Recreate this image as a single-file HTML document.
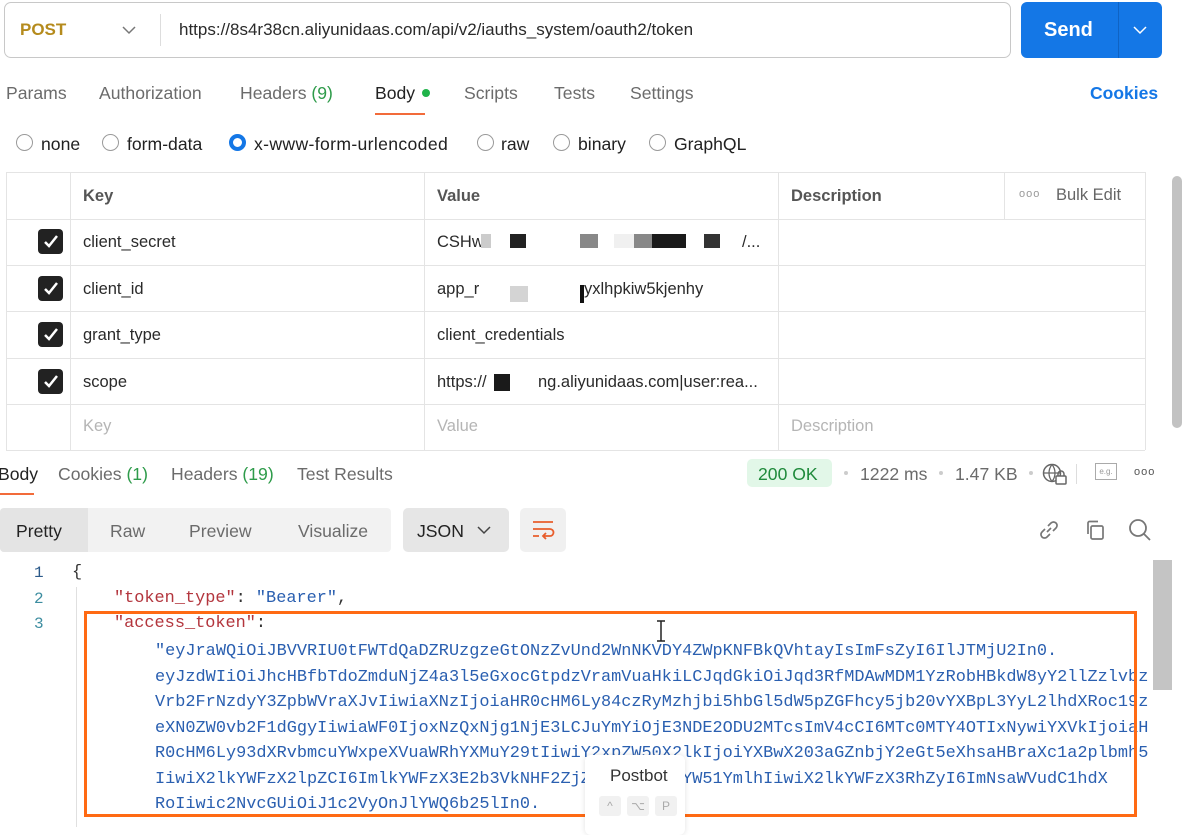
<!DOCTYPE html>
<html><head><meta charset="utf-8"><style>
*{box-sizing:border-box;margin:0;padding:0}
body{width:1185px;height:827px;overflow:hidden;background:#fff;font-family:"Liberation Sans",sans-serif;position:relative;color:#212121}
.a{position:absolute;white-space:nowrap}
.g{color:#6b6b6b}
.cb{position:absolute;left:38px;width:25px;height:25px;background:#222;border-radius:4px}
.cb svg{position:absolute;left:4px;top:4px}
.hl{position:absolute;left:6px;width:1139px;height:1px;background:#e4e4e4}
.vl{position:absolute;width:1px;background:#e4e4e4}
.rad{position:absolute;width:17px;height:17px;border:1.5px solid #9a9a9a;border-radius:50%}
.code{position:absolute;font-family:"Liberation Mono",monospace;font-size:16.9px;white-space:pre;color:#2a5fb0}
.k{color:#b3353d}
.p{color:#333}
.ln{position:absolute;left:34px;font-family:"Liberation Mono",monospace;font-size:16px;color:#3d8da0}
.cell{position:absolute;font-size:16.5px;color:#2a2a2a;white-space:nowrap}
.t{font-size:17.6px}
</style></head><body>
<div class="a" style="left:4px;top:2px;width:1007px;height:56px;border:1.5px solid #c8c8c8;border-radius:7px"></div>
<div class="a" style="left:20px;top:20px;font-size:17px;font-weight:bold;color:#b58b1d">POST</div>
<svg class="a" style="left:122px;top:25px" width="14" height="10"><path d="M1 2l6 6 6-6" stroke="#777" fill="none" stroke-width="1.5"/></svg>
<div class="a" style="left:160px;top:14px;width:1px;height:32px;background:#ddd"></div>
<div class="a" style="left:179px;top:20px;font-size:17px;color:#2a2a2a">https://8s4r38cn.aliyunidaas.com/api/v2/iauths_system/oauth2/token</div>
<div class="a" style="left:1021px;top:2px;width:141px;height:56px;background:#1477e6;border-radius:6px"></div>
<div class="a" style="left:1118px;top:2px;width:1px;height:56px;background:#0f63c4"></div>
<div class="a" style="left:1044px;top:19px;font-size:20px;font-weight:bold;color:#fff">Send</div>
<svg class="a" style="left:1133px;top:25px" width="14" height="10"><path d="M1 2l6 6 6-6" stroke="#fff" fill="none" stroke-width="1.5"/></svg>
<div class="a g t" style="left:6px;top:83px">Params</div>
<div class="a g t" style="left:99px;top:83px">Authorization</div>
<div class="a g t" style="left:240px;top:83px">Headers <span style="color:#2e9b4a">(9)</span></div>
<div class="a t" style="left:375px;top:83px;color:#222">Body</div>
<div class="a" style="left:422px;top:89px;width:8px;height:8px;border-radius:50%;background:#20b34a"></div>
<div class="a" style="left:375px;top:113px;width:50px;height:2px;background:#f26b3a"></div>
<div class="a g t" style="left:464px;top:83px">Scripts</div>
<div class="a g t" style="left:554px;top:83px">Tests</div>
<div class="a g t" style="left:630px;top:83px">Settings</div>
<div class="a" style="left:1090px;top:83px;font-size:17.5px;font-weight:bold;color:#1477e6">Cookies</div>
<div class="rad" style="left:16px;top:134px"></div><div class="a t" style="left:41px;top:134px">none</div>
<div class="rad" style="left:102px;top:134px"></div><div class="a t" style="left:127px;top:134px">form-data</div>
<div class="rad" style="left:229px;top:134px;border:4.5px solid #1477e6"></div><div class="a t" style="left:254px;top:134px;letter-spacing:0.35px">x-www-form-urlencoded</div>
<div class="rad" style="left:477px;top:134px"></div><div class="a t" style="left:501px;top:134px">raw</div>
<div class="rad" style="left:553px;top:134px"></div><div class="a t" style="left:578px;top:134px">binary</div>
<div class="rad" style="left:649px;top:134px"></div><div class="a t" style="left:674px;top:134px">GraphQL</div>
<div class="hl" style="top:172px"></div>
<div class="hl" style="top:219px"></div>
<div class="hl" style="top:265px"></div>
<div class="hl" style="top:311px"></div>
<div class="hl" style="top:358px"></div>
<div class="hl" style="top:404px"></div>
<div class="hl" style="top:450px"></div>
<div class="vl" style="left:6px;top:172px;height:278px"></div>
<div class="vl" style="left:70px;top:172px;height:278px"></div>
<div class="vl" style="left:424px;top:172px;height:278px"></div>
<div class="vl" style="left:778px;top:172px;height:278px"></div>
<div class="vl" style="left:1004px;top:172px;height:47px"></div>
<div class="vl" style="left:1145px;top:172px;height:278px"></div>
<div class="cell" style="left:83px;top:187px;font-weight:bold;color:#555">Key</div>
<div class="cell" style="left:437px;top:187px;font-weight:bold;color:#555">Value</div>
<div class="cell" style="left:791px;top:187px;font-weight:bold;color:#555">Description</div>
<div class="cell" style="left:1019px;top:188px;color:#999;font-size:11px;letter-spacing:1px">ooo</div>
<div class="cell" style="left:1056px;top:186px;color:#666">Bulk Edit</div>
<div class="cb" style="top:229px"><svg width="17" height="17"><path d="M3 9l4 4 8-10" stroke="#fff" stroke-width="2.5" fill="none"/></svg></div>
<div class="cb" style="top:276px"><svg width="17" height="17"><path d="M3 9l4 4 8-10" stroke="#fff" stroke-width="2.5" fill="none"/></svg></div>
<div class="cb" style="top:322px"><svg width="17" height="17"><path d="M3 9l4 4 8-10" stroke="#fff" stroke-width="2.5" fill="none"/></svg></div>
<div class="cb" style="top:369px"><svg width="17" height="17"><path d="M3 9l4 4 8-10" stroke="#fff" stroke-width="2.5" fill="none"/></svg></div>
<div class="cell" style="left:83px;top:233px">client_secret</div>
<div class="cell" style="left:83px;top:280px">client_id</div>
<div class="cell" style="left:83px;top:326px">grant_type</div>
<div class="cell" style="left:83px;top:373px">scope</div>
<div class="cell" style="left:437px;top:233px">CSHw</div>
<div class="a" style="left:481px;top:234px;width:10px;height:14px;background:#ccc"></div>
<div class="a" style="left:510px;top:234px;width:16px;height:14px;background:#222"></div>
<div class="a" style="left:580px;top:234px;width:18px;height:14px;background:#888"></div>
<div class="a" style="left:614px;top:234px;width:20px;height:14px;background:#f0f0f0"></div>
<div class="a" style="left:634px;top:234px;width:18px;height:14px;background:#888"></div>
<div class="a" style="left:652px;top:234px;width:34px;height:14px;background:#1a1a1a"></div>
<div class="a" style="left:704px;top:234px;width:16px;height:14px;background:#333"></div>
<div class="cell" style="left:742px;top:233px">/...</div>
<div class="cell" style="left:437px;top:280px">app_r</div>
<div class="a" style="left:510px;top:286px;width:18px;height:16px;background:#d4d4d4"></div>
<div class="a" style="left:580px;top:285px;width:4px;height:18px;background:#111"></div>
<div class="cell" style="left:584px;top:280px">yxlhpkiw5kjenhy</div>
<div class="cell" style="left:437px;top:326px">client_credentials</div>
<div class="cell" style="left:437px;top:373px">https://</div>
<div class="a" style="left:494px;top:374px;width:16px;height:17px;background:#1a1a1a"></div>
<div class="cell" style="left:538px;top:373px">ng.aliyunidaas.com|user:rea...</div>
<div class="cell" style="left:83px;top:417px;color:#b5b5b5">Key</div>
<div class="cell" style="left:437px;top:417px;color:#b5b5b5">Value</div>
<div class="cell" style="left:791px;top:417px;color:#b5b5b5">Description</div>
<div class="a" style="left:1172px;top:176px;width:10px;height:252px;background:#c2c2c2;border-radius:5px"></div>
<div class="a t" style="left:-2px;top:464px;color:#222">Body</div>
<div class="a" style="left:0;top:493px;width:34px;height:2px;background:#f26b3a"></div>
<div class="a g t" style="left:58px;top:464px">Cookies <span style="color:#2e9b4a">(1)</span></div>
<div class="a g t" style="left:171px;top:464px">Headers <span style="color:#2e9b4a">(19)</span></div>
<div class="a g t" style="left:297px;top:464px">Test Results</div>
<div class="a" style="left:747px;top:459px;width:85px;height:28px;background:#e2f7e8;border-radius:5px"></div>
<div class="a t" style="left:758px;top:464px;color:#1f8a3b">200 OK</div>
<div class="a" style="left:844px;top:471px;width:4px;height:4px;border-radius:50%;background:#ccc"></div>
<div class="a g t" style="left:860px;top:464px">1222 ms</div>
<div class="a" style="left:939px;top:471px;width:4px;height:4px;border-radius:50%;background:#ccc"></div>
<div class="a g t" style="left:955px;top:464px">1.47 KB</div>
<div class="a" style="left:1029px;top:471px;width:4px;height:4px;border-radius:50%;background:#ccc"></div>
<svg class="a" style="left:1042px;top:462px" width="26" height="24"><circle cx="10" cy="11" r="8.5" stroke="#666" stroke-width="1.5" fill="none"/><path d="M2 11h17M10 2.5c-4 5-4 12 0 17M10 2.5c4 5 4 12 0 17" stroke="#666" stroke-width="1.3" fill="none"/><rect x="14" y="14" width="10" height="8" rx="1" fill="#fff" stroke="#666" stroke-width="1.5"/><path d="M16 14v-2a3 3 0 016 0v2" stroke="#666" stroke-width="1.5" fill="none"/></svg>
<div class="a" style="left:1076px;top:464px;width:1px;height:20px;background:#ddd"></div>
<div class="a" style="left:1095px;top:463px;width:22px;height:17px;border:1px solid #aaa;font-size:8px;color:#999;text-align:center;line-height:15px">e.g.</div>
<div class="a" style="left:1134px;top:466px;font-size:11px;color:#555;letter-spacing:1px">ooo</div>
<div class="a" style="left:0;top:508px;width:391px;height:44px;background:#f2f2f2;border-radius:4px"></div>
<div class="a" style="left:0;top:508px;width:88px;height:44px;background:#e4e4e4;border-radius:4px 0 0 4px"></div>
<div class="a t" style="left:16px;top:521px;color:#222">Pretty</div>
<div class="a g t" style="left:110px;top:521px">Raw</div>
<div class="a g t" style="left:189px;top:521px">Preview</div>
<div class="a g t" style="left:298px;top:521px">Visualize</div>
<div class="a" style="left:403px;top:508px;width:106px;height:44px;background:#e6e6e6;border-radius:5px"></div>
<div class="a t" style="left:417px;top:521px;color:#222">JSON</div>
<svg class="a" style="left:477px;top:525px" width="14" height="10"><path d="M1 2l6 6 6-6" stroke="#444" fill="none" stroke-width="1.5"/></svg>
<div class="a" style="left:520px;top:508px;width:46px;height:44px;background:#f0f0f0;border-radius:5px"></div>
<svg class="a" style="left:531px;top:519px" width="24" height="22"><path d="M2 3h20M2 10h17a3.5 3.5 0 010 7h-7M15 14l-3 3 3 3M2 17h6" stroke="#e85d2c" stroke-width="1.8" fill="none"/></svg>
<svg class="a" style="left:1037px;top:518px" width="24" height="24"><path d="M10 14l4-4M8 11l-3 3a3.5 3.5 0 005 5l3-3M16 13l3-3a3.5 3.5 0 00-5-5l-3 3" stroke="#777" stroke-width="1.7" fill="none"/></svg>
<svg class="a" style="left:1083px;top:518px" width="24" height="24"><rect x="8" y="8" width="12" height="13" rx="1.5" stroke="#777" stroke-width="1.7" fill="none"/><path d="M5 16V5a1.5 1.5 0 011.5-1.5H15" stroke="#777" stroke-width="1.7" fill="none"/></svg>
<svg class="a" style="left:1127px;top:517px" width="26" height="26"><circle cx="11" cy="11" r="8" stroke="#777" stroke-width="1.8" fill="none"/><path d="M17 17l6 6" stroke="#777" stroke-width="1.8"/></svg>
<div class="ln" style="top:564px;color:#2c5a8a">1</div>
<div class="ln" style="top:590px">2</div>
<div class="ln" style="top:615px">3</div>
<div class="a" style="left:76px;top:587px;width:1px;height:240px;background:#e0e0e0"></div>
<div class="code p" style="left:72px;top:563px">{</div>
<div class="code" style="left:114px;top:589px"><span class="k">"token_type"</span><span class="p">: </span>"Bearer"<span class="p">,</span></div>
<div class="code" style="left:114px;top:614px"><span class="k">"access_token"</span><span class="p">:</span></div>
<div class="code" style="left:155px;top:639px;line-height:25.5px">"eyJraWQiOiJBVVRIU0tFWTdQaDZRUzgzeGtONzZvUnd2WnNKVDY4ZWpKNFBkQVhtayIsImFsZyI6IlJTMjU2In0.
eyJzdWIiOiJhcHBfbTdoZmduNjZ4a3l5eGxocGtpdzVramVuaHkiLCJqdGkiOiJqd3RfMDAwMDM1YzRobHBkdW8yY2llZzlvbz
Vrb2FrNzdyY3ZpbWVraXJvIiwiaXNzIjoiaHR0cHM6Ly84czRyMzhjbi5hbGl5dW5pZGFhcy5jb20vYXBpL3YyL2lhdXRoc19z
eXN0ZW0vb2F1dGgyIiwiaWF0IjoxNzQxNjg1NjE3LCJuYmYiOjE3NDE2ODU2MTcsImV4cCI6MTc0MTY4OTIxNywiYXVkIjoiaH
R0cHM6Ly93dXRvbmcuYWxpeXVuaWRhYXMuY29tIiwiY2xpZW50X2lkIjoiYXBwX203aGZnbjY2eGt5eXhsaHBraXc1a2plbmh5
IiwiX2lkYWFzX2lpZCI6ImlkYWFzX3E2b3VkNHF2ZjZ2amVkb3d0YW51YmlhIiwiX2lkYWFzX3RhZyI6ImNsaWVudC1hdX
RoIiwic2NvcGUiOiJ1c2VyOnJlYWQ6b25lIn0.</div>
<div class="a" style="left:84px;top:611px;width:1053px;height:206px;border:3.5px solid #ff6a13"></div>
<div class="a" style="left:1153px;top:560px;width:19px;height:130px;background:#c4c4c4"></div>
<svg class="a" style="left:655px;top:620px" width="12" height="22"><path d="M2 1h8M6 1v20M2 21h8" stroke="#222" stroke-width="1.5"/></svg>
<div class="a" style="left:585px;top:755px;width:100px;height:80px;background:#fff;border-radius:6px;box-shadow:0 0 6px rgba(0,0,0,.12)"></div>
<div class="a" style="left:610px;top:766px;font-size:17px;color:#333">Postbot</div>
<div class="a" style="left:599px;top:796px;width:22px;height:20px;background:#f1f1f1;border-radius:3px;font-size:12px;color:#aaa;text-align:center;line-height:20px">^</div>
<div class="a" style="left:627px;top:796px;width:22px;height:20px;background:#f1f1f1;border-radius:3px;font-size:12px;color:#aaa;text-align:center;line-height:20px">⌥</div>
<div class="a" style="left:655px;top:796px;width:22px;height:20px;background:#f1f1f1;border-radius:3px;font-size:12px;color:#aaa;text-align:center;line-height:20px">P</div>
</body></html>
